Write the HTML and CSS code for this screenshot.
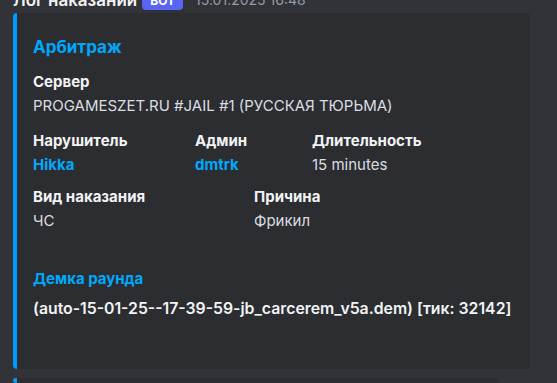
FILE: index.html
```html
<!DOCTYPE html>
<html lang="ru">
<head>
  <meta charset="UTF-8" />
  <title>Лог наказаний</title>
  <link rel="stylesheet" href="styles.css">
</head>
<body>
  <div class="message">
    <div class="msg-header">
      <span class="author">Лог наказаний</span>
      <span class="bot-tag">BOT</span>
      <span class="timestamp">15.01.2025 16:48</span>
    </div>

    <div class="embed">
      <div class="embed-title">Арбитраж</div>

      <div class="field">
        <div class="field-name">Сервер</div>
        <div class="field-value">PROGAMESZET.RU #JAIL #1 (РУССКАЯ ТЮРЬМА)</div>
      </div>

      <div class="field-row three">
        <div class="field">
          <div class="field-name">Нарушитель</div>
          <div class="field-value mention">Hikka</div>
        </div>
        <div class="field">
          <div class="field-name">Админ</div>
          <div class="field-value mention">dmtrk</div>
        </div>
        <div class="field">
          <div class="field-name">Длительность</div>
          <div class="field-value">15 minutes</div>
        </div>
      </div>

      <div class="field-row two">
        <div class="field">
          <div class="field-name">Вид наказания</div>
          <div class="field-value">ЧС</div>
        </div>
        <div class="field">
          <div class="field-name">Причина</div>
          <div class="field-value">Фрикил</div>
        </div>
      </div>

      <div class="embed-desc">
        <div class="desc-title">Демка раунда</div>
        <div class="desc-text">(auto-15-01-25--17-39-59-jb_carcerem_v5a.dem) [тик: 32142]</div>
      </div>
    </div>

    <div class="embed next"></div>
  </div>
</body>
</html>
```

FILE: styles.css
```css
body {
  margin: 0;
  background: #313338;
  font-family: Inter, "Noto Sans", sans-serif;
  color: #dbdee1;
  overflow: hidden;
}
.message {
  padding: 0 13px;
  margin-top: -11px;
}
.msg-header {
  display: flex;
  align-items: center;
  height: 22px;
  line-height: 22px;
}
.author {
  font-size: 17px;
  font-weight: 600;
  color: #f2f3f5;
}
.bot-tag {
  background: #5865f2;
  color: #fff;
  font-size: 12px;
  font-weight: 700;
  border-radius: 4px;
  padding: 0 8px;
  height: 19px;
  line-height: 19px;
  margin-left: 5px;
}
.timestamp {
  font-size: 14px;
  color: #949ba4;
  margin-left: 12px;
}
.embed {
  width: 481px;
  margin-top: 2px;
  background: #2b2d31;
  border-left: 4px solid #0099ff;
  border-radius: 4px;
  padding: 23px 16px 50px 16px;
}
.embed.next {
  height: 5px;
  padding: 0;
  margin-top: 9px;
}
.embed-title {
  font-size: 17px;
  font-weight: 700;
  color: #00a8fc;
  line-height: 22px;
  margin-bottom: 14px;
}
.field {
  font-size: 15px;
  line-height: 20px;
}
.field-name {
  font-weight: 700;
  color: #f2f3f5;
  margin-bottom: 4px;
}
.field-value {
  color: #dbdee1;
}
.field-value.mention {
  color: #00a8fc;
  font-weight: 700;
}
.field-row {
  display: grid;
  margin-top: 15px;
}
.field-row.three {
  grid-template-columns: 162px 117px auto;
}
.field-row.two {
  grid-template-columns: 221px auto;
  margin-top: 12px;
}
.embed-desc {
  margin-top: 38px;
  font-size: 15px;
  line-height: 20px;
}
.desc-title {
  font-weight: 700;
  color: #00a8fc;
  margin-bottom: 10px;
}
.desc-text {
  font-size: 15.8px;
  font-weight: 600;
  color: #f2f3f5;
  white-space: nowrap;
}
```
